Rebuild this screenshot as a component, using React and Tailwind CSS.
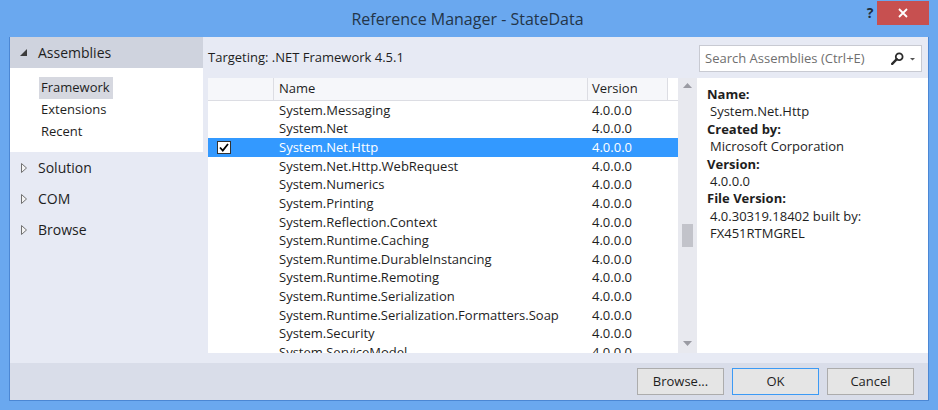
import { useState } from 'react';

const assemblies = [
  'System.Messaging',
  'System.Net',
  'System.Net.Http',
  'System.Net.Http.WebRequest',
  'System.Numerics',
  'System.Printing',
  'System.Reflection.Context',
  'System.Runtime.Caching',
  'System.Runtime.DurableInstancing',
  'System.Runtime.Remoting',
  'System.Runtime.Serialization',
  'System.Runtime.Serialization.Formatters.Soap',
  'System.Security',
  'System.ServiceModel',
];

function Expanded() {
  return (
    <svg width="7" height="7" viewBox="0 0 7 7" className="shrink-0">
      <path d="M7 0 L7 7 L0 7 Z" fill="#3c3c3c" />
    </svg>
  );
}

function Collapsed() {
  return (
    <svg width="6" height="10" viewBox="0 0 6 10" className="shrink-0">
      <path d="M0.5 0.5 L5.5 5 L0.5 9.5 Z" fill="#f4f4f4" stroke="#707070" strokeWidth="1" />
    </svg>
  );
}

export default function App() {
  const [selected, setSelected] = useState('System.Net.Http');

  return (
    <div className="w-[938px] h-[410px] bg-[#6aa8ef] flex flex-col text-[#1e1e1e] font-['Open_Sans',sans-serif] overflow-hidden">
      {/* title bar */}
      <div className="h-[37px] flex items-start shrink-0">
        <div className="flex-1 h-full flex items-center justify-center pl-[75px] text-[16px] text-[#233549]">
          Reference Manager - StateData
        </div>
        <div className="w-[20px] h-[25px] flex items-center justify-center font-bold text-[14px] text-[#1f2d3d]">?</div>
        <div className="w-[52px] h-[24px] mt-[1px] mr-[9px] ml-[-3px] bg-[#c75050] flex items-center justify-center">
          <svg width="10" height="10" viewBox="0 0 10 10">
            <path d="M1 1 L9 9 M9 1 L1 9" stroke="#fff" strokeWidth="1.8" />
          </svg>
        </div>
      </div>

      {/* body */}
      <div className="flex-1 mx-[9px] mb-[9px] border-x border-b border-[#4b87d4] flex flex-col bg-[#e7eaf4]">
        <div className="flex h-[321px]">
          {/* left nav */}
          <div className="w-[193px] flex flex-col">
            <div className="h-[31px] bg-[#cfd3de] flex items-center pl-[10px] gap-[11px]">
              <Expanded />
              <span className="text-[14px]">Assemblies</span>
            </div>
            <div className="h-[84px] bg-white flex flex-col pt-[9px] pl-[29px] text-[13px]">
              <div className="h-[22px] w-[74px] bg-[#d6d8e0] flex items-center pl-[2px]">Framework</div>
              <div className="h-[22px] flex items-center pl-[2px]">Extensions</div>
              <div className="h-[22px] flex items-center pl-[2px]">Recent</div>
            </div>
            {['Solution', 'COM', 'Browse'].map((s) => (
              <div key={s} className="h-[31px] flex items-center pl-[11px] gap-[11px] text-[14px] first-of-type:mt-[-2px]">
                <Collapsed />
                <span>{s}</span>
              </div>
            ))}
          </div>

          {/* right side */}
          <div className="flex-1 flex flex-col pl-[5px]">
            <div className="h-[41px] flex items-center">
              <div className="flex-1 text-[13px]">Targeting: .NET Framework 4.5.1</div>
              <div className="w-[223px] h-[27px] mr-[6px] bg-white border border-[#c8cad2] flex items-center pl-[5px] pr-[4px] mb-[-2px]">
                <span className="flex-1 text-[13px] text-[#6f6f6f]">Search Assemblies (Ctrl+E)</span>
                <svg width="13" height="13" viewBox="0 0 13 13">
                  <circle cx="8.2" cy="4.8" r="3.4" fill="none" stroke="#2b2b2b" strokeWidth="1.8" />
                  <path d="M5.8 7.2 L1.2 11.8" stroke="#2b2b2b" strokeWidth="2.4" strokeLinecap="round" />
                </svg>
                <svg width="9" height="6" viewBox="0 0 9 6" className="ml-[4px]">
                  <path d="M2 2 L7 2 L4.5 4.5 Z" fill="#555" />
                </svg>
              </div>
            </div>

            <div className="h-[275px] flex">
              {/* list */}
              <div className="w-[470px] bg-white flex flex-col overflow-hidden">
                <div className="h-[23px] shrink-0 flex bg-[#f6f7fa] border-b border-[#dcdde3] text-[13px]">
                  <div className="w-[66px] border-r border-[#dcdde3]" />
                  <div className="w-[314px] border-r border-[#dcdde3] flex items-center pl-[5px]">Name</div>
                  <div className="w-[80px] border-r border-[#dcdde3] flex items-center pl-[4px]">Version</div>
                  <div className="flex-1 bg-white" />
                </div>
                {assemblies.map((a) => {
                  const sel = a === selected;
                  return (
                    <div
                      key={a}
                      onClick={() => setSelected(a)}
                      className={`h-[18.67px] shrink-0 flex items-center text-[13px] ${sel ? 'bg-[#3399ff] text-white' : ''}`}
                    >
                      <div className="w-[66px] pl-[9px] flex items-center">
                        {sel && (
                          <div className="w-[14px] h-[13px] bg-white border border-[#333] flex items-center justify-center">
                            <svg width="10" height="9" viewBox="0 0 10 9">
                              <path d="M1 4.5 L3.8 7.5 L9 1" fill="none" stroke="#000" strokeWidth="1.8" />
                            </svg>
                          </div>
                        )}
                      </div>
                      <div className="w-[314px] pl-[5px] whitespace-nowrap">{a}</div>
                      <div className="pl-[4px]">4.0.0.0</div>
                    </div>
                  );
                })}
              </div>

              {/* scrollbar */}
              <div className="w-[19px] bg-[#e8e9ef] flex flex-col items-center">
                <svg width="9" height="5" viewBox="0 0 9 5" className="mt-[5px]">
                  <path d="M0 5 L4.5 0 L9 5 Z" fill="#9a9ba3" />
                </svg>
                <div className="w-[11px] h-[23px] bg-[#c2c3ca] mt-[136px]" />
                <div className="flex-1" />
                <svg width="9" height="5" viewBox="0 0 9 5" className="mb-[7px]">
                  <path d="M0 0 L9 0 L4.5 5 Z" fill="#9a9ba3" />
                </svg>
              </div>

              {/* details */}
              <div className="flex-1 bg-white pl-[10px] pt-[8px] text-[13px] leading-[17.4px]">
                <div className="font-bold">Name:</div>
                <div className="pl-[3px]">System.Net.Http</div>
                <div className="font-bold">Created by:</div>
                <div className="pl-[3px]">Microsoft Corporation</div>
                <div className="font-bold">Version:</div>
                <div className="pl-[3px]">4.0.0.0</div>
                <div className="font-bold">File Version:</div>
                <div className="pl-[3px]">4.0.30319.18402 built by:</div>
                <div className="pl-[3px]">FX451RTMGREL</div>
              </div>
            </div>
          </div>
        </div>

        {/* footer */}
        <div className="mt-[5px] flex-1 bg-[#d9dde9] flex items-center justify-end gap-[8px] pr-[14px] text-[13px]">
          <button className="w-[87px] h-[27px] bg-[#e5e5e5] border border-[#acacac]">Browse...</button>
          <button className="w-[87px] h-[27px] bg-[#e5e5e5] border border-[#3c9af5]">OK</button>
          <button className="w-[87px] h-[27px] bg-[#e5e5e5] border border-[#acacac]">Cancel</button>
        </div>
      </div>
    </div>
  );
}
